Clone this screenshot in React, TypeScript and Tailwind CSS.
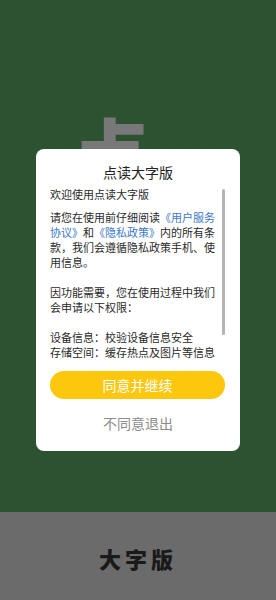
const cjk = { fontFamily: '"Noto Sans CJK SC", "Noto Sans", sans-serif' };

const PrivacyDialog = () => {
  return (
    <div className="absolute left-[36px] top-[149px] w-[204px] h-[302px] rounded-[8px] bg-white flex flex-col" style={cjk}>
      <h2 className="pt-[14px] text-center text-[14px] leading-[18px] text-[#222]">点读大字版</h2>

      {/* scroll area */}
      <div className="relative mt-[6px] h-[172px] overflow-hidden pl-[14px]">
        <div className="w-[169px] text-[11px] leading-[15px] text-[#2a2a2a]">
          <p className="mb-[8px]">欢迎使用点读大字版</p>
          <p>
            请您在使用前仔细阅读<span className="text-[#3b78c9]">《用户服务协议》</span>和
            <span className="text-[#3b78c9]">《隐私政策》</span>内的所有条款，我们会遵循隐私政策手机、使用信息。
          </p>
          <p className="mt-[15px]">因功能需要，您在使用过程中我们会申请以下权限：</p>
          <p className="mt-[15px]">设备信息：校验设备信息安全</p>
          <p>存储空间：缓存热点及图片等信息</p>
        </div>
        <div className="absolute left-[186px] top-[2px] w-[3px] h-[146px] rounded-full bg-[#b4b4b4]" />
      </div>

      <button className="mt-[12px] ml-[14px] w-[175px] h-[28px] rounded-full bg-[#fcc70c] text-white text-[14px] leading-[28px]">
        同意并继续
      </button>
      <button className="mt-[14px] h-[20px] text-[14px] leading-[20px] text-[#8c8c8c]">不同意退出</button>
    </div>
  );
};

export default function App() {
  return (
    <div className="relative w-[276px] h-[600px] flex flex-col overflow-hidden" style={cjk}>
      <div className="h-[512px] bg-[#2d5232] overflow-hidden pl-[70px] pt-[111px]">
        <span className="block text-[80px] leading-[80px] font-black text-[#787878]">点</span>
      </div>
      <div className="flex-1 bg-[#6b6b6b] flex items-center justify-center pt-[4px]">
        <span className="text-[22px] font-black tracking-[4px] text-[#1a1a1a]">大字版</span>
      </div>
      <PrivacyDialog />
    </div>
  );
}
